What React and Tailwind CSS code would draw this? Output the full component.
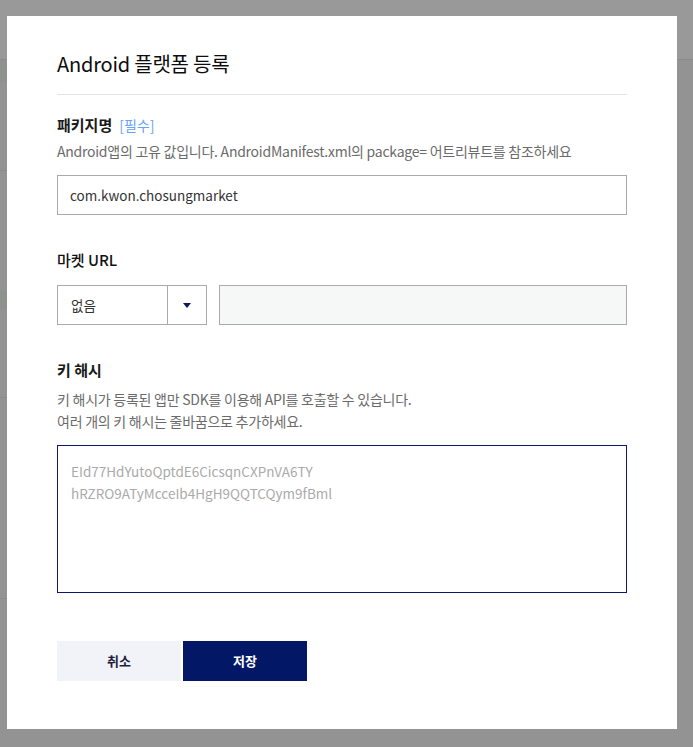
import React from "react";

export default function App() {
  return (
    <div
      className="relative w-[693px] h-[747px] overflow-hidden bg-[#929392]"
      style={{ fontFamily: '"Noto Sans CJK KR", "Noto Sans", sans-serif' }}
    >
      {/* background page (dimmed) */}
      <div className="h-[60px] bg-[#999999] border-b border-[#8b8b8b]" />
      <div className="flex">
        <div className="w-[40px] flex flex-col">
          <div className="h-[22px] bg-[#8f918f]" />
          <div className="h-[89px] border-b border-[#8a8a8a] bg-[#939393]" />
          <div className="h-[120px] bg-[#939393]" />
          <div className="h-[18px] bg-[#8f918f]" />
          <div className="h-[89px] border-b border-[#8a8a8a] bg-[#939393]" />
          <div className="h-[201px] border-b border-[#8a8a8a] bg-[#939393]" />
        </div>
        <div className="flex-1" />
      </div>

      {/* modal */}
      <div className="absolute left-[7px] top-[16px] w-[670px] h-[713px] bg-white px-[50px] pt-[36px] pb-[48px] flex flex-col">
        <div className="h-[43px] border-b border-[#e3e3e3]">
          <h1 className="text-[20px] leading-[24px] font-normal text-[#0d0d0d] tracking-[-0.2px]">
            Android 플랫폼 등록
          </h1>
        </div>

        {/* 패키지명 */}
        <div className="mt-[19px] flex items-center gap-[7px] h-[22px]">
          <span className="text-[15px] leading-[22px] font-bold text-[#1a1a1a]">패키지명</span>
          <span className="text-[14px] leading-[22px] text-[#66a3fb]">[필수]</span>
        </div>
        <p className="mt-[5px] text-[14px] leading-[20px] text-[#6b6b6b] tracking-[-0.25px] whitespace-nowrap">
          Android앱의 고유 값입니다. AndroidManifest.xml의 package= 어트리뷰트를 참조하세요
        </p>
        <div className="mt-[14px] h-[40px] border border-[#aaaaaa] flex items-center pl-[12px]">
          <span className="text-[13.5px] text-[#333333]">com.kwon.chosungmarket</span>
        </div>

        {/* 마켓 URL */}
        <div className="mt-[34px] h-[22px] flex items-center">
          <span className="text-[15px] leading-[22px] font-medium text-[#111111]">마켓 URL</span>
        </div>
        <div className="mt-[14px] flex gap-[12px]">
          <div className="w-[150px] h-[40px] border border-[#aaaaaa] flex">
            <div className="w-[110px] border-r border-[#aaaaaa] flex items-center pl-[13px]">
              <span className="text-[13.5px] text-[#333333]">없음</span>
            </div>
            <div className="flex-1 flex items-center justify-center">
              <svg width="8" height="5" viewBox="0 0 8 5">
                <polygon points="0,0 8,0 4,5" fill="#0a1a5c" />
              </svg>
            </div>
          </div>
          <div className="flex-1 h-[40px] border border-[#aaaaaa] bg-[#f6f7f7]" />
        </div>

        {/* 키 해시 */}
        <div className="mt-[34px] h-[22px] flex items-center">
          <span className="text-[15px] leading-[22px] font-bold text-[#1a1a1a]">키 해시</span>
        </div>
        <div className="mt-[7px] text-[14px] leading-[22px] text-[#6b6b6b] tracking-[-0.25px]">
          <p>키 해시가 등록된 앱만 SDK를 이용해 API를 호출할 수 있습니다.</p>
          <p>여러 개의 키 해시는 줄바꿈으로 추가하세요.</p>
        </div>
        <div className="mt-[13px] h-[148px] border border-[#0b1a66] pl-[13px] pt-[14px]">
          <p className="text-[13.5px] leading-[22px] text-[#aaaaaa]">EId77HdYutoQptdE6CicsqnCXPnVA6TY</p>
          <p className="text-[13.5px] leading-[22px] text-[#aaaaaa]">hRZRO9ATyMcceIb4HgH9QQTCQym9fBml</p>
        </div>

        {/* buttons */}
        <div className="mt-[48px] flex gap-[2px]">
          <button className="w-[124px] h-[40px] bg-[#f2f3f8] text-[13px] font-bold text-[#1e1e3c]">
            취소
          </button>
          <button className="w-[124px] h-[40px] bg-[#031767] text-[13px] font-bold text-white">
            저장
          </button>
        </div>
      </div>
    </div>
  );
}
